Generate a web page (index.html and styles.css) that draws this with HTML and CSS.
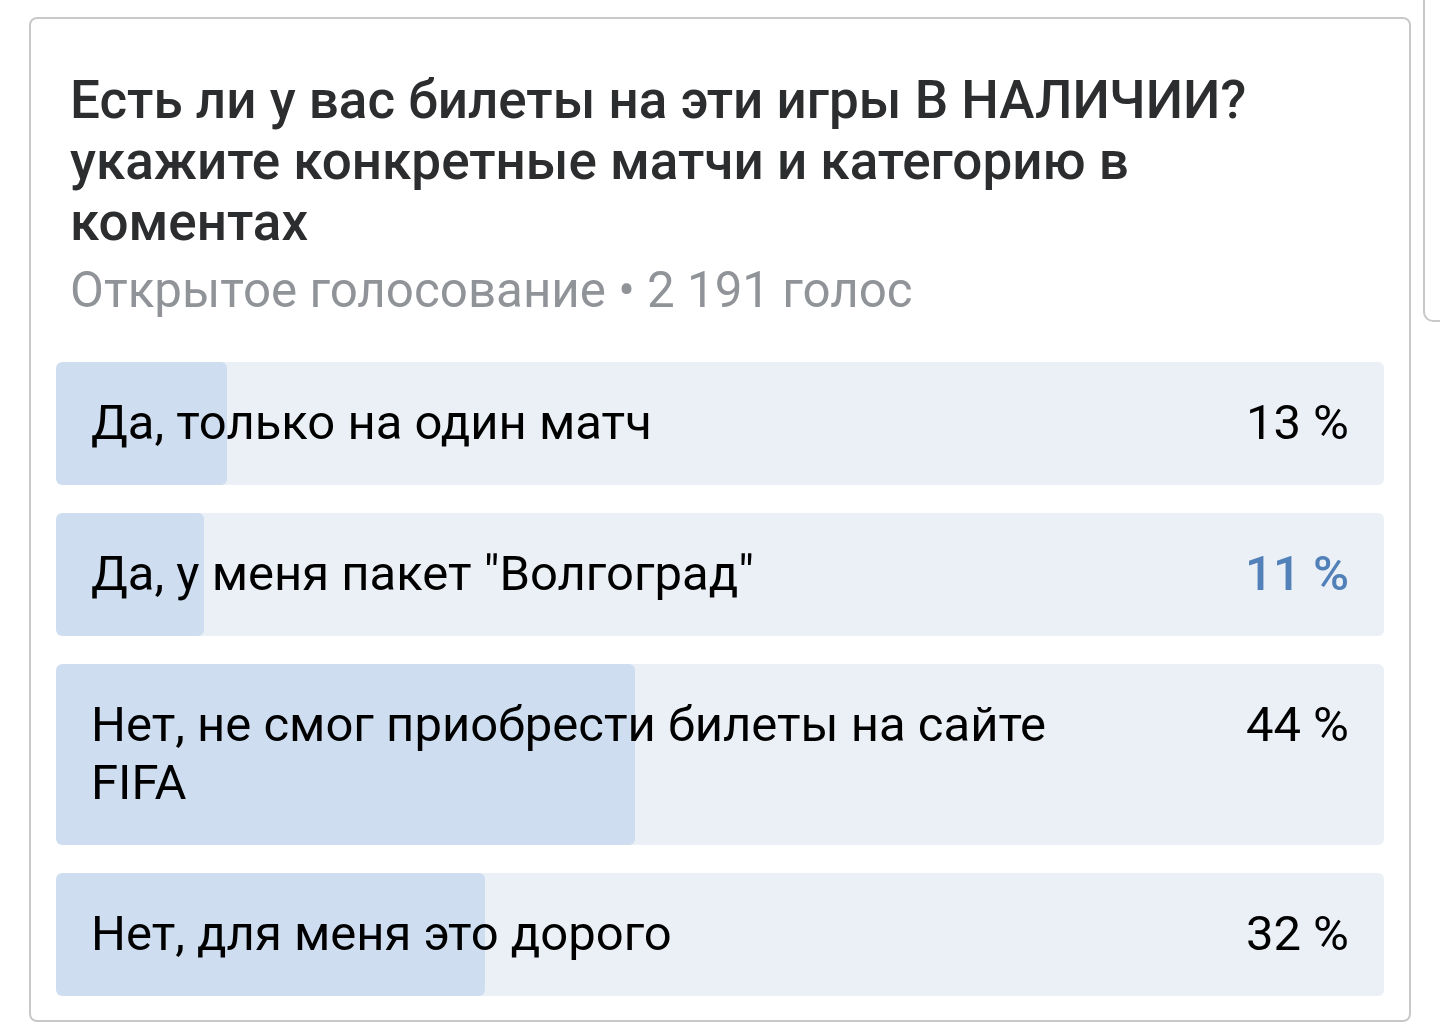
FILE: index.html
```html
<!DOCTYPE html>
<html lang="ru">
<head>
    <meta charset="UTF-8">
    <meta name="viewport" content="width=device-width, initial-scale=1.0">
    <title>Опрос</title>
    <link rel="stylesheet" href="styles.css">
</head>
<body>
    <div class="feed">
        <div class="poll">
            <div class="poll-head">
                <h1 class="poll-title">Есть ли у вас билеты на эти игры В НАЛИЧИИ? укажите конкретные матчи и категорию в коментах</h1>
                <div class="poll-meta">Открытое голосование • 2 191 голос</div>
            </div>

            <div class="poll-options">
                <div class="option">
                    <div class="option-fill" style="width: 12.9%"></div>
                    <span class="option-text">Да, только на один матч</span>
                    <span class="option-percent">13 %</span>
                </div>
                <div class="option option-voted">
                    <div class="option-fill" style="width: 11.15%"></div>
                    <span class="option-text">Да, у меня пакет "Волгоград"</span>
                    <span class="option-percent">11 %</span>
                </div>
                <div class="option">
                    <div class="option-fill" style="width: 43.6%"></div>
                    <span class="option-text">Нет, не смог приобрести билеты на сайте FIFA</span>
                    <span class="option-percent">44 %</span>
                </div>
                <div class="option">
                    <div class="option-fill" style="width: 32.3%"></div>
                    <span class="option-text">Нет, для меня это дорого</span>
                    <span class="option-percent">32 %</span>
                </div>
            </div>
        </div>

        <div class="next-card"></div>
    </div>
</body>
</html>
```

FILE: styles.css
```css
body {
    margin: 0;
    background: #ffffff;
    font-family: Roboto, "Noto Sans", Arial, sans-serif;
    overflow: hidden;
}
.feed {
    display: flex;
    align-items: flex-start;
    gap: 12px;
    padding: 17px 0 0 29px;
    overflow: hidden;
}
.poll {
    flex-shrink: 0;
    box-sizing: border-box;
    width: 1382px;
    height: 1005px;
    border: 2px solid #c9c9c9;
    border-radius: 8px;
    padding: 0 25px;
}
.poll-head {
    padding: 51px 15px 0 14px;
}
.poll-title {
    margin: 0;
    font-size: 53px;
    line-height: 61px;
    font-weight: 500;
    color: #2c2d2e;
}
.poll-meta {
    margin-top: 8px;
    font-size: 49.3px;
    line-height: 58px;
    color: #909499;
}
.poll-options {
    display: flex;
    flex-direction: column;
    gap: 28px;
    margin-top: 43px;
}
.option {
    position: relative;
    display: flex;
    justify-content: space-between;
    align-items: flex-start;
    gap: 60px;
    padding: 32px 35px 33px 35px;
    background: #ebf0f6;
    border-radius: 6px;
    overflow: hidden;
    font-size: 49px;
    line-height: 58px;
    color: #000000;
}
.option-fill {
    position: absolute;
    left: 0;
    top: 0;
    bottom: 0;
    background: #cedef0;
    border-radius: 6px;
}
.option-text {
    position: relative;
    max-width: 980px;
}
.option-percent {
    position: relative;
    flex-shrink: 0;
}
.option-voted .option-percent {
    color: #5181b8;
    font-weight: 500;
}
.next-card {
    flex-shrink: 0;
    box-sizing: border-box;
    width: 300px;
    height: 322px;
    margin-top: -17px;
    border: 2px solid #c9c9c9;
    border-top: none;
    border-right: none;
    border-bottom-left-radius: 10px;
}
```
